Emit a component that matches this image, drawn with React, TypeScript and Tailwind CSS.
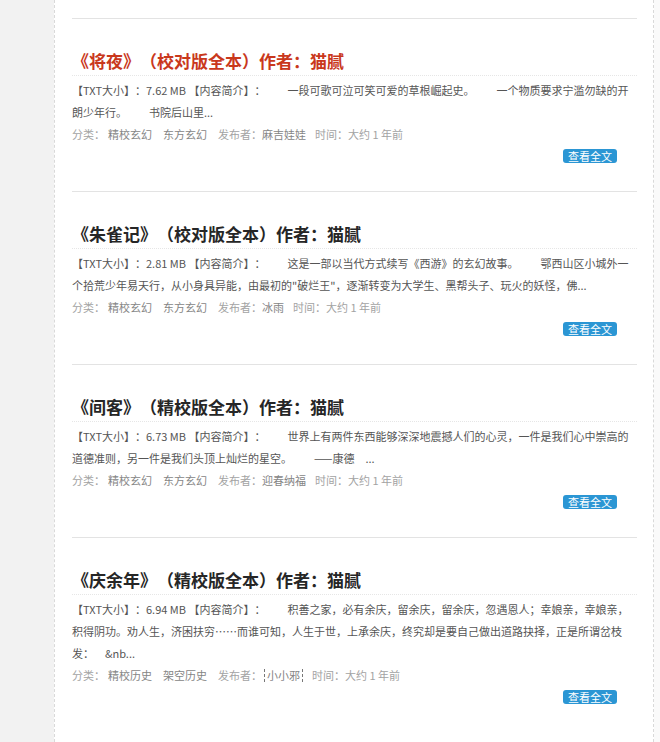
const BOOKS = [
  {
    title: '《将夜》（校对版全本）作者：猫腻',
    active: true,
    desc: [
      '【TXT大小】：7.62 MB 【内容简介】：　　一段可歌可泣可笑可爱的草根崛起史。　　一个物质要求宁滥勿缺的开',
      '朗少年行。　　书院后山里...',
    ],
    tags: ['精校玄幻', '东方玄幻'],
    publisher: '麻吉娃娃',
  },
  {
    title: '《朱雀记》（校对版全本）作者：猫腻',
    desc: [
      '【TXT大小】：2.81 MB 【内容简介】：　　这是一部以当代方式续写《西游》的玄幻故事。　　鄂西山区小城外一',
      '个拾荒少年易天行，从小身具异能，由最初的"破烂王"，逐渐转变为大学生、黑帮头子、玩火的妖怪，佛...',
    ],
    tags: ['精校玄幻', '东方玄幻'],
    publisher: '冰雨',
  },
  {
    title: '《间客》（精校版全本）作者：猫腻',
    desc: [
      '【TXT大小】：6.73 MB 【内容简介】：　　世界上有两件东西能够深深地震撼人们的心灵，一件是我们心中崇高的',
      '道德准则，另一件是我们头顶上灿烂的星空。　　——康德　...',
    ],
    tags: ['精校玄幻', '东方玄幻'],
    publisher: '迎春纳福',
  },
  {
    title: '《庆余年》（精校版全本）作者：猫腻',
    desc: [
      '【TXT大小】：6.94 MB 【内容简介】：　　积善之家，必有余庆，留余庆，留余庆，忽遇恩人；幸娘亲，幸娘亲，',
      '积得阴功。劝人生，济困扶穷……而谁可知，人生于世，上承余庆，终究却是要自己做出道路抉择，正是所谓岔枝',
      '发：　&nb...',
    ],
    tags: ['精校历史', '架空历史'],
    publisher: '小小邪',
    focused: true,
  },
]

export default function App() {
  return (
    <div
      className="flex min-h-screen w-full [text-spacing-trim:space-all]"
      style={{ fontFamily: '"Noto Sans CJK SC", "Noto Sans", sans-serif' }}
    >
      {/* left gutter */}
      <div className="w-[54px] shrink-0 bg-[#f2f2f2]" />

      <main className="w-[600px] shrink-0 border-x border-dashed border-x-[#d9d9d9] bg-white pl-[17px] pr-[16px] pt-[18px]">
        {BOOKS.map((book, i) => (
          <article key={i} className="border-t border-[#e3e3e3] pt-[28px] pb-[28px]">
            <h2
              className={`border-b border-dotted border-[#e6e6e6] text-[17px] font-bold leading-[28px] ${
                book.active ? 'text-[#c9381c]' : 'text-[#262626]'
              }`}
            >
              {book.title}
            </h2>

            <div className="pt-[3px] text-[11px] leading-[22px] text-[#555]">
              {book.desc.map((line, j) => (
                <p key={j} className="whitespace-pre">
                  {line}
                </p>
              ))}
            </div>

            <div className="flex items-center text-[11px] leading-[22px] text-[#a3a3a3]">
              <span className="mr-[3px]">分类：</span>
              {book.tags.map(tag => (
                <a key={tag} className="mr-[11px] text-[#858585]">
                  {tag}
                </a>
              ))}
              <span>发布者：</span>
              {book.focused ? (
                <a className="mr-[9px] ml-[2px] border-x border-dashed border-x-[#777] px-[2px] leading-[13px] text-[#858585]">
                  {book.publisher}
                </a>
              ) : (
                <a className="mr-[9px] text-[#858585]">{book.publisher}</a>
              )}
              <span>时间：大约 1 年前</span>
            </div>

            <div className="mt-[4px] flex justify-end pr-[20px]">
              <a className="rounded-[3px] bg-[#2b96d4] px-[5px] text-[11px] leading-[14px] text-white">
                查看全文
              </a>
            </div>
          </article>
        ))}
      </main>

      <div className="flex-1 bg-[#fafafa]" />
    </div>
  )
}
